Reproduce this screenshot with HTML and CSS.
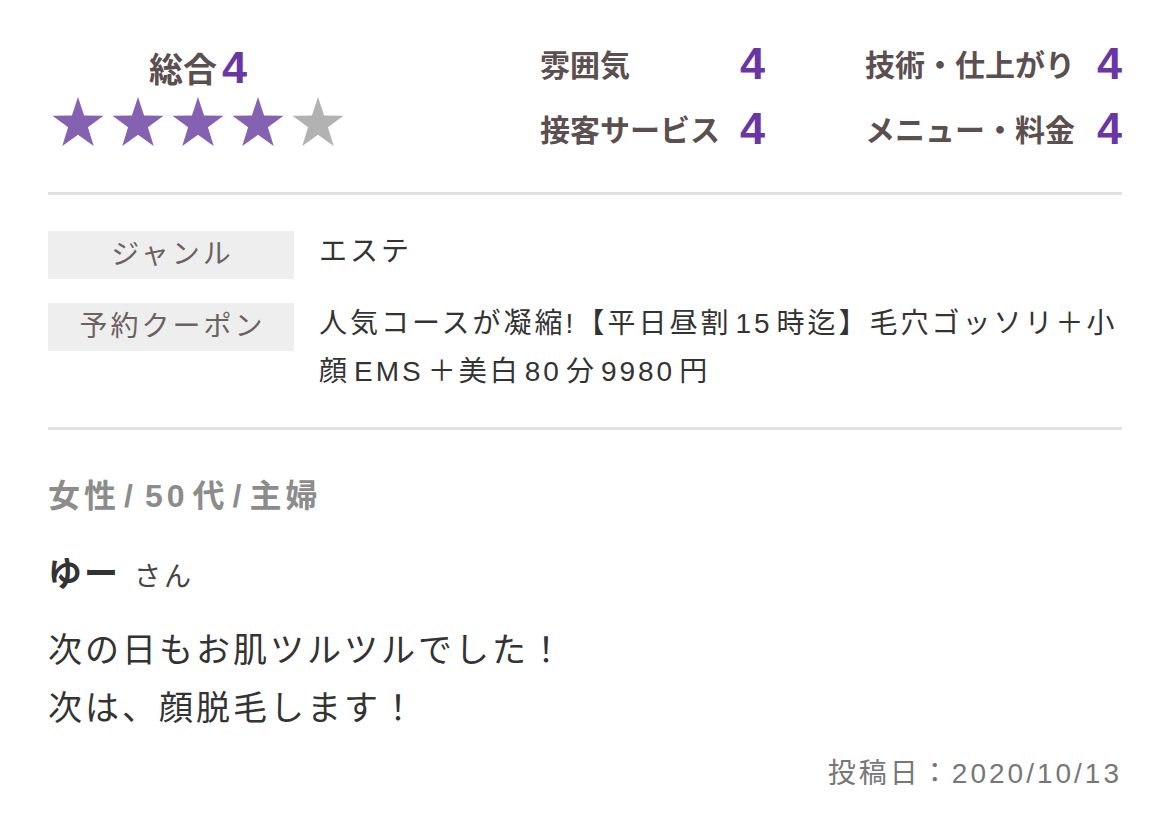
FILE: index.html
```html
<!DOCTYPE html>
<html lang="ja">
<head>
<meta charset="utf-8">
<link rel="stylesheet" href="styles.css">
</head>
<body>
<div class="review">
  <section class="ratings">
    <div class="overall">
      <div class="overall-title"><span class="overall-label">総合</span><span class="num">4</span></div>
      <div class="stars">
        <svg class="star on" viewBox="0 0 52 50"><polygon points="26,0 32.1,18.5 51.5,18.8 35.9,30.3 41.7,49 26,37.8 10.3,49 16.1,30.3 0.5,18.8 19.9,18.5"/></svg>
        <svg class="star on" viewBox="0 0 52 50"><polygon points="26,0 32.1,18.5 51.5,18.8 35.9,30.3 41.7,49 26,37.8 10.3,49 16.1,30.3 0.5,18.8 19.9,18.5"/></svg>
        <svg class="star on" viewBox="0 0 52 50"><polygon points="26,0 32.1,18.5 51.5,18.8 35.9,30.3 41.7,49 26,37.8 10.3,49 16.1,30.3 0.5,18.8 19.9,18.5"/></svg>
        <svg class="star on" viewBox="0 0 52 50"><polygon points="26,0 32.1,18.5 51.5,18.8 35.9,30.3 41.7,49 26,37.8 10.3,49 16.1,30.3 0.5,18.8 19.9,18.5"/></svg>
        <svg class="star off" viewBox="0 0 52 50"><polygon points="26,0 32.1,18.5 51.5,18.8 35.9,30.3 41.7,49 26,37.8 10.3,49 16.1,30.3 0.5,18.8 19.9,18.5"/></svg>
      </div>
    </div>
    <div class="details">
      <div class="item"><span class="label">雰囲気</span><span class="num">4</span></div>
      <div class="item"><span class="label">技術・仕上がり</span><span class="num">4</span></div>
      <div class="item"><span class="label">接客サービス</span><span class="num">4</span></div>
      <div class="item"><span class="label">メニュー・料金</span><span class="num">4</span></div>
    </div>
  </section>
  <hr class="divider">
  <section class="info">
    <div class="info-label">ジャンル</div>
    <div class="info-value">エステ</div>
    <div class="info-label">予約クーポン</div>
    <div class="info-value">人気コースが凝縮!【平日昼割<span class="lat">15</span>時迄】毛穴ゴッソリ＋小<br>顔<span class="lat">EMS</span>＋美白<span class="lat">80</span>分<span class="lat">9980</span>円</div>
  </section>
  <hr class="divider">
  <section class="post">
    <div class="profile">女性<span class="sp">/</span><span class="sp">50</span>代<span class="sp">/</span>主婦</div>
    <div class="author"><span class="name">ゆー</span><span class="san">さん</span></div>
    <p class="comment">次の日もお肌ツルツルでした！<br>次は、顔脱毛します！</p>
    <div class="date">投稿日：2020/10/13</div>
  </section>
</div>
</body>
</html>
```
FILE: styles.css
```css
* { box-sizing: border-box; }
html, body { margin: 0; padding: 0; background: #fff; }
body {
  font-family: "Liberation Sans", "Noto Sans CJK JP", sans-serif;
  color: #333;
}
.review {
  width: 1170px;
  padding: 0 48px;
}
.ratings {
  display: flex;
  align-items: flex-start;
  justify-content: space-between;
  height: 192px;
}
.overall {
  width: 300px;
  display: flex;
  flex-direction: column;
  align-items: center;
  padding-top: 46px;
}
.overall-title {
  height: 42px;
  display: flex;
  align-items: center;
}
.overall-label {
  font-size: 34px;
  font-weight: 700;
  color: #5b4f4f;
  margin-right: 5px;
}
.num {
  font-family: "Liberation Sans", Arial, sans-serif;
  font-weight: 700;
  font-size: 45px;
  color: #6a36a3;
  line-height: 1;
}
.stars {
  display: flex;
  gap: 8px;
  margin-top: 9px;
}
.star { width: 52px; height: 50px; display: block; }
.star.on { fill: #8561b1; }
.star.off { fill: #b2b2b2; }
.details {
  width: 582px;
  display: grid;
  grid-template-columns: 225px 257px;
  column-gap: 100px;
  row-gap: 15px;
  padding-top: 38px;
}
.item {
  height: 50px;
  display: flex;
  align-items: center;
  justify-content: space-between;
}
.label {
  font-size: 30px;
  font-weight: 700;
  color: #5b4f4f;
}
.divider {
  margin: 0;
  border: 0;
  height: 3px;
  background: #e1e1e1;
}
.info {
  display: grid;
  grid-template-columns: 246px 1fr;
  column-gap: 25px;
  row-gap: 24px;
  padding: 36px 0 31px;
}
.info-label {
  background: #eeeeee;
  height: 48px;
  line-height: 48px;
  text-align: center;
  font-size: 28px;
  letter-spacing: 3px;
  text-indent: 3px;
  color: #6d6161;
}
.info-value {
  font-size: 28px;
  line-height: 48px;
  letter-spacing: 3px;
  color: #333;
  margin-top: -3px;
}
.lat { margin: 0 4px; }
.post { padding-top: 46px; }
.profile {
  font-size: 32px;
  font-weight: 700;
  letter-spacing: 4px;
  color: #8c8c8c;
  line-height: 40px;
}
.sp { margin: 0 4px; }
.author {
  margin-top: 38px;
  line-height: 40px;
  display: flex;
  align-items: baseline;
}
.name {
  font-size: 34px;
  font-weight: 700;
  letter-spacing: 2px;
  color: #333;
}
.san {
  font-size: 27px;
  letter-spacing: 3px;
  color: #444;
  margin-left: 14px;
}
.comment {
  margin: 24px 0 0;
  font-size: 34px;
  line-height: 58px;
  letter-spacing: 3px;
  color: #333;
}
.date {
  margin-top: 17px;
  text-align: right;
  font-size: 28px;
  line-height: 40px;
  letter-spacing: 3px;
  color: #777;
}
```
